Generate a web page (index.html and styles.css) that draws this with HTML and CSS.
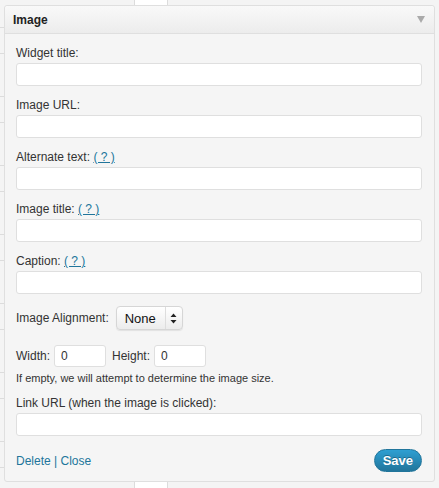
FILE: index.html
```html
<!DOCTYPE html>
<html lang="en">
<head>
<meta charset="UTF-8">
<title>Image widget</title>
<link rel="stylesheet" href="styles.css">
</head>
<body>
<div class="widget">
    <div class="widget-top">
        <h4>Image</h4>
        <span class="toggle"></span>
    </div>
    <div class="widget-inside">
        <p class="field">
            <label>Widget title:</label>
            <input type="text">
        </p>
        <p class="field">
            <label>Image URL:</label>
            <input type="text">
        </p>
        <p class="field">
            <label>Alternate text: <a href="#">( ? )</a></label>
            <input type="text">
        </p>
        <p class="field">
            <label>Image title: <a href="#">( ? )</a></label>
            <input type="text">
        </p>
        <p class="field">
            <label>Caption: <a href="#">( ? )</a></label>
            <input type="text">
        </p>
        <div class="align-row">
            <span>Image Alignment:</span>
            <div class="select">
                <span class="select-value">None</span>
                <span class="select-arrows">
                    <svg width="7" height="11" viewBox="0 0 7 11"><path d="M3.5 0.5 L6.5 4 L0.5 4 Z M3.5 10.5 L6.5 7 L0.5 7 Z" fill="#222"/></svg>
                </span>
            </div>
        </div>
        <div class="size-row">
            <span>Width:</span>
            <input type="text" class="small" value="0">
            <span>Height:</span>
            <input type="text" class="small" value="0">
        </div>
        <p class="note">If empty, we will attempt to determine the image size.</p>
        <p class="field">
            <label>Link URL (when the image is clicked):</label>
            <input type="text">
        </p>
        <div class="widget-control">
            <div class="actions"><a href="#">Delete</a> | <a href="#">Close</a></div>
            <button>Save</button>
        </div>
    </div>
</div>
</body>
</html>
```

FILE: styles.css
```css
body {
    margin: 0;
    height: 488px;
    font-family: "Liberation Sans", Arial, sans-serif;
    font-size: 12px;
    color: #333;
    background:
        repeating-linear-gradient(to bottom, transparent 0, transparent 27px, #dcdcdc 27px, #dcdcdc 28px, transparent 28px, transparent 53px, #dcdcdc 53px, #dcdcdc 54px, transparent 54px, transparent 69px) 0 0 / 4px 100% no-repeat,
        linear-gradient(to right, transparent 134px, #dcdcdc 134px, #dcdcdc 135px, #fff 135px, #fff 167px, #dcdcdc 167px, #dcdcdc 168px, transparent 168px),
        #f4f4f4;
}

.widget {
    margin: 5px 4px 0 4px;
    width: 429px;
    background-color: #f5f5f5;
    border: 1px solid #dfdfdf;
    border-radius: 3px;
    box-shadow: 0 1px 0 #fff inset;
}

.widget-top {
    display: flex;
    align-items: center;
    justify-content: space-between;
    height: 27px;
    padding: 0 8px 0 8px;
    background: linear-gradient(to bottom, #f9f9f9, #ececec);
    border-bottom: 1px solid #dfdfdf;
    border-radius: 3px 3px 0 0;
}

.widget-top h4 {
    margin: 0;
    font-size: 12px;
    font-weight: bold;
    color: #222;
}

.toggle {
    width: 0;
    height: 0;
    border-left: 4px solid transparent;
    border-right: 4px solid transparent;
    border-top: 7px solid #aaa;
    margin-right: 1px;
}

.widget-inside {
    padding: 11px 12px 9px 11px;
}

.field {
    margin: 0 0 11px 0;
}

.field label {
    display: block;
    line-height: 17px;
    margin-bottom: 1px;
}

a {
    color: #21759b;
}

.field label a {
    text-decoration: underline;
}

input {
    box-sizing: border-box;
    width: 100%;
    height: 23px;
    margin: 0;
    padding: 2px 6px;
    font-family: "Liberation Sans", Arial, sans-serif;
    font-size: 12px;
    color: #333;
    background: #fff;
    border: 1px solid #dfdfdf;
    border-radius: 3px;
}

.align-row {
    display: flex;
    align-items: center;
    gap: 7px;
    height: 26px;
}

.select {
    display: flex;
    width: 67px;
    height: 24px;
    box-sizing: border-box;
    border: 1px solid #d6d6d6;
    border-radius: 4px;
    background: linear-gradient(to bottom, #fff, #ececec);
    box-shadow: 0 1px 1px rgba(0,0,0,0.08);
}

.select-value {
    flex: 1;
    display: flex;
    align-items: center;
    padding-left: 8px;
    font-size: 13px;
    color: #111;
}

.select-arrows {
    display: flex;
    align-items: center;
    justify-content: center;
    width: 16px;
    border-left: 1px solid #ddd;
}

.size-row {
    display: flex;
    align-items: center;
    gap: 4px;
    margin-top: 14px;
}

.size-row input.small {
    width: 52px;
    height: 22px;
    margin-right: 2px;
}

.note {
    margin: 4px 0 0 0;
    font-size: 11px;
    line-height: 14px;
}

.note + .field {
    margin-top: 10px;
}

.widget-control {
    display: flex;
    align-items: center;
    justify-content: space-between;
    margin-top: 13px;
}

.actions {
    font-size: 12px;
    color: #21759b;
}

.actions a {
    text-decoration: none;
}

button {
    height: 23px;
    padding: 0 8px;
    font-family: "Liberation Sans", Arial, sans-serif;
    font-size: 13px;
    font-weight: bold;
    color: #fff;
    background: linear-gradient(to bottom, #2e9fd2, #21759b);
    border: 1px solid #21759b;
    border-radius: 12px;
    text-shadow: 0 -1px 0 rgba(0,0,0,0.3);
}
```
